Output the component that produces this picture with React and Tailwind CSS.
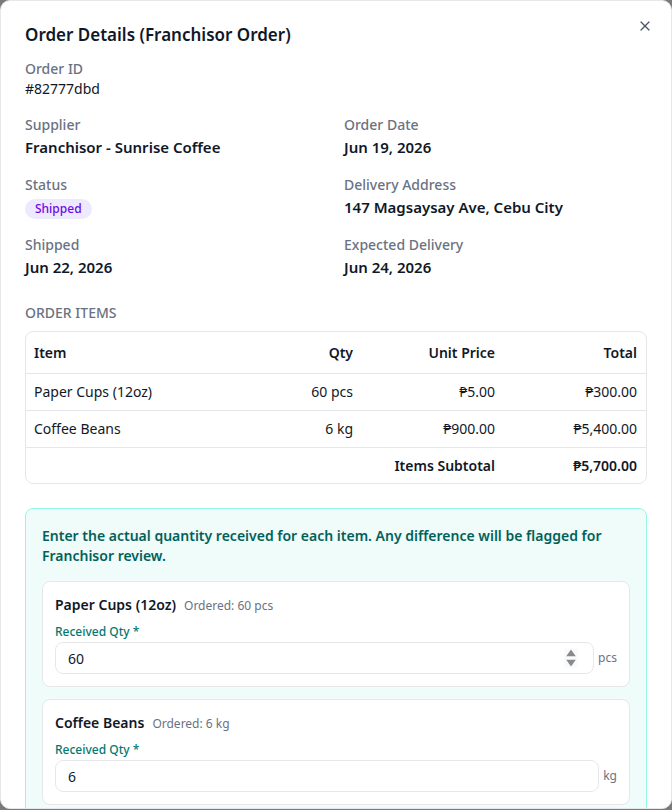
import React from "react";
import { X } from "lucide-react";

const items = [
  { name: "Paper Cups (12oz)", qty: "60 pcs", price: "₱5.00", total: "₱300.00", received: "60", unit: "pcs", ordered: "60 pcs" },
  { name: "Coffee Beans", qty: "6 kg", price: "₱900.00", total: "₱5,400.00", received: "6", unit: "kg", ordered: "6 kg" },
];

const Field = ({ label, children }) => (
  <div>
    <div className="text-[14px] leading-5 text-gray-500 font-medium">{label}</div>
    <div>{children}</div>
  </div>
);

const Spinner = () => (
  <div className="absolute right-[16px] top-1/2 -translate-y-1/2 flex flex-col items-center gap-[3px] bg-gray-50 px-[2px] py-[1px]">
    <svg width="10" height="7" viewBox="0 0 10 7"><path d="M5 0L10 7H0z" fill="#8a8a8a" /></svg>
    <svg width="10" height="7" viewBox="0 0 10 7"><path d="M5 7L0 0H10z" fill="#8a8a8a" /></svg>
  </div>
);

export default function App() {
  return (
    <div className="h-[810px] overflow-hidden bg-[#7a7a7a]" style={{ fontFamily: '"Noto Sans", "Open Sans", sans-serif' }}>
      <div className="relative h-[809px] overflow-hidden rounded-[10px] border border-gray-200 bg-white px-[24px] pt-[20px] text-gray-900">
        <button className="absolute right-[18px] top-[17px] text-gray-600">
          <X size={16} strokeWidth={1.8} />
        </button>

        <h2 className="text-[17px] leading-7 font-semibold">Order Details (Franchisor Order)</h2>

        <div className="mt-[10px]">
          <Field label="Order ID">
            <div className="text-[14px] leading-5">#82777dbd</div>
          </Field>
        </div>

        <div className="mt-[16px] grid grid-cols-2 gap-x-4 gap-y-4">
          <Field label="Supplier">
            <div className="text-[15px] leading-6 font-semibold">Franchisor - Sunrise Coffee</div>
          </Field>
          <Field label="Order Date">
            <div className="text-[15px] leading-6 font-semibold">Jun 19, 2026</div>
          </Field>
          <Field label="Status">
            <span className="mt-[4px] inline-flex rounded-full bg-violet-100 px-2.5 py-[1px] text-[12px] leading-[18px] font-medium text-violet-700">Shipped</span>
          </Field>
          <Field label="Delivery Address">
            <div className="text-[15px] leading-6 font-semibold">147 Magsaysay Ave, Cebu City</div>
          </Field>
          <Field label="Shipped">
            <div className="text-[15px] leading-6 font-semibold">Jun 22, 2026</div>
          </Field>
          <Field label="Expected Delivery">
            <div className="text-[15px] leading-6 font-semibold">Jun 24, 2026</div>
          </Field>
        </div>

        <div className="mt-[24px] text-[14px] leading-5 font-medium uppercase text-gray-500">Order Items</div>

        <div className="mt-[8px] overflow-hidden rounded-lg border border-gray-200">
          <table className="w-full text-[14px]">
            <thead>
              <tr className="border-b border-gray-200 h-[41px]">
                <th className="pl-[8px] text-left font-semibold">Item</th>
                <th className="text-right font-semibold">Qty</th>
                <th className="w-[142px] text-right font-semibold">Unit Price</th>
                <th className="w-[151px] pr-[9px] text-right font-semibold">Total</th>
              </tr>
            </thead>
            <tbody>
              {items.map((it) => (
                <tr key={it.name} className="border-b border-gray-200 h-[37px]">
                  <td className="pl-[8px]">{it.name}</td>
                  <td className="text-right">{it.qty}</td>
                  <td className="text-right">{it.price}</td>
                  <td className="pr-[9px] text-right">{it.total}</td>
                </tr>
              ))}
              <tr className="h-[36px]">
                <td></td>
                <td></td>
                <td className="text-right font-semibold">Items Subtotal</td>
                <td className="pr-[9px] text-right font-semibold">₱5,700.00</td>
              </tr>
            </tbody>
          </table>
        </div>

        <div className="mt-[24px] rounded-lg border border-teal-200 bg-[#effcf9] px-4 pt-[17px] pb-4">
          <p className="text-[14px] leading-5 font-semibold text-teal-800">
            Enter the actual quantity received for each item. Any difference will be flagged for Franchisor review.
          </p>
          <div className="mt-[15px] flex flex-col gap-3">
            {items.map((it, i) => (
              <div key={it.name} className="rounded-lg border border-gray-200 bg-white px-3 pt-[13px] pb-[12px]">
                <div className="flex items-baseline gap-2">
                  <span className="text-[14px] leading-5 font-semibold">{it.name}</span>
                  <span className="text-[12px] text-gray-500">Ordered: {it.ordered}</span>
                </div>
                <div className="mt-[9px] text-[12px] leading-4 font-medium text-teal-700">Received Qty *</div>
                <div className="mt-[2px] flex items-center gap-1">
                  <div className="relative flex-1">
                    <input
                      type="text"
                      defaultValue={it.received}
                      className="h-[32px] w-full rounded-lg border border-gray-200 px-3 text-[14px] outline-none"
                    />
                    {i === 0 && <Spinner />}
                  </div>
                  <span className="text-[12px] text-gray-500">{it.unit}</span>
                </div>
              </div>
            ))}
          </div>
        </div>
      </div>
    </div>
  );
}
